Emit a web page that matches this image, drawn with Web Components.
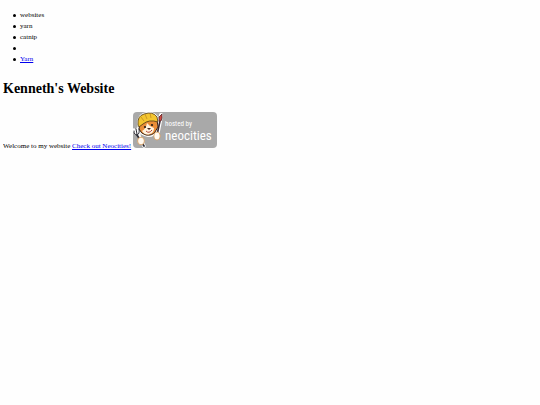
<!DOCTYPE html>
<html lang="en">
<head>
  <meta charset="utf-8">
  <meta name="viewport" content="width=device-width, initial-scale=1">
  <title>Kenneth's Website</title>
  <style>
    body {
      margin: 10px 3px;
      background: #fefefe;
      color: #000;
      font: 7px/11px "Liberation Serif", serif;
    }
  </style>
</head>
<body>
  <topic-list>
    <li>websites</li>
    <li>yarn</li>
    <li>catnip</li>
    <li></li>
    <li><a href="#yarn">Yarn</a></li>
  </topic-list>
  <site-welcome>
    <span slot="title">Kenneth's Website</span>
    Welcome to my website <a href="#neocities">Check out Neocities!</a>
    <neocities-badge></neocities-badge>
  </site-welcome>

  <script>
    class TopicList extends HTMLElement {
      constructor() {
        super()

        this.attachShadow({ mode: 'open' })

        this.shadowRoot.innerHTML = `
          <style>
            :host {
              display: block;
            }

            ul {
              margin: 0;
              padding-left: 10px;
              list-style: none;
            }

            ::slotted(li) {
              display: flex;
              align-items: center;
              gap: 4px;
              min-height: 11px;
            }

            ::slotted(li)::before {
              content: '';
              width: 3px;
              height: 3px;
              border-radius: 50%;
              background-color: currentColor;
            }
          </style>
          <ul><slot></slot></ul>
        `
      }
    }

    class SiteWelcome extends HTMLElement {
      constructor() {
        super()

        this.attachShadow({ mode: 'open' })

        this.shadowRoot.innerHTML = `
          <style>
            :host {
              display: block;
            }

            h1 {
              margin: 14px 0 13px;
              font-size: 14px;
              line-height: 20px;
            }
          </style>
          <h1><slot name="title"></slot></h1>
          <slot></slot>
        `
      }
    }

    class NeocitiesBadge extends HTMLElement {
      constructor() {
        super()

        this.attachShadow({ mode: 'open' })

        this.shadowRoot.innerHTML = `
          <style>
            :host {
              display: inline-block;
              vertical-align: baseline;
            }

            svg {
              display: block;
            }

            text {
              fill: #fff;
              font-family: "Roboto Condensed", "Open Sans Condensed", "Open Sans", sans-serif;
            }
          </style>
          <svg width="84" height="36" viewBox="0 0 84 36" role="img" aria-label="hosted by neocities">
            <rect width="84" height="36" rx="4" fill="#a9a9a9"/>
            <!-- white outline -->
            <g stroke="#fff" stroke-width="2" stroke-linejoin="round" stroke-linecap="round" fill="#fff">
              <path d="M5 10Q6 2 14 1Q22 0 25 7L25 17Q22 24 15 24Q8 23 6 18Z"/>
              <path d="M1 18L5 22L11 34M5 17L6 23" fill="none" stroke-width="3.4"/>
              <path d="M28 3L27 9L24 24" fill="none" stroke-width="4"/>
            </g>
            <!-- face -->
            <path d="M7 11L6 17Q8 22 13 23Q19 24 22 20L25 15L24 8L15 8Z" fill="#e98d38" stroke="#3b281a"/>
            <path d="M9 19Q13 17 14 11Q17 15 21 16Q21 21 17 22Q12 24 9 19Z" fill="#fff3df"/>
            <!-- hard hat -->
            <path d="M5 13Q4 4 11 2Q20 -1 24 5L25 10Q16 7 10 12L6 15Z" fill="#f3c52f" stroke="#4a3516" stroke-width=".8"/>
            <path d="M8 5L11 9M12 2L14 7M17 1L18 6" fill="none" stroke="#b98220" stroke-width=".7"/>
            <circle cx="12" cy="15" r="1.1" fill="#211a17"/>
            <circle cx="19" cy="13" r="1.1" fill="#211a17"/>
            <path d="M14 16L18 16L16 18Z" fill="#43251f"/>
            <path d="M13 19Q16 22 19 18" fill="none" stroke="#b3453a"/>
            <!-- fork -->
            <g fill="none" stroke="#2d2d35" stroke-linecap="round">
              <path d="M4 23L11 34" stroke-width="1.8"/>
              <path d="M1 19Q1 23 4 23Q7 22 6 17M3 17L4 22"/>
            </g>
            <!-- brush -->
            <path d="M27 9L24 23" stroke="#3b2930" stroke-width="1.6"/>
            <path d="M26 9L26 5L29 2L29 6L28 9Z" fill="#cf4943" stroke="#4e2427" stroke-width=".8"/>
            <!-- paws -->
            <g fill="#fff9f0" stroke="#d89a5b" stroke-width=".8">
              <ellipse cx="8" cy="29" rx="3.4" ry="3.8"/>
              <ellipse cx="24" cy="24" rx="3.2" ry="4"/>
            </g>
            <text x="32" y="14" font-size="7">hosted by</text>
            <text x="32" y="28" font-size="13">neocities</text>
          </svg>
        `
      }
    }

    customElements.define('topic-list', TopicList)
    customElements.define('site-welcome', SiteWelcome)
    customElements.define('neocities-badge', NeocitiesBadge)
  </script>
</body>
</html>
